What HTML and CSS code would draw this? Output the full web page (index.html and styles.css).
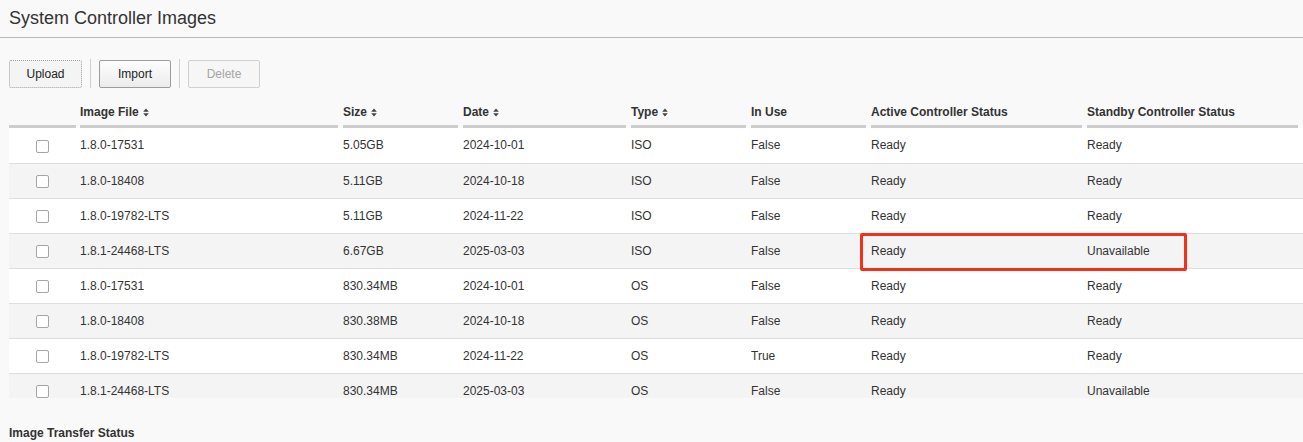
FILE: index.html
```html
<!DOCTYPE html>
<html lang="en">
<head>
<meta charset="utf-8">
<title>System Controller Images</title>
<link rel="stylesheet" href="styles.css">
</head>
<body>
<div class="page">
  <h1 class="title">System Controller Images</h1>
  <div class="toolbar">
    <button class="btn btn-focus">Upload</button>
    <span class="sep"></span>
    <button class="btn">Import</button>
    <span class="sep"></span>
    <button class="btn" disabled>Delete</button>
  </div>
  <div class="table-wrap">
    <table class="grid">
      <colgroup>
        <col class="c-check"><col class="c-file"><col class="c-size"><col class="c-date"><col class="c-type"><col class="c-use"><col class="c-active"><col class="c-standby">
      </colgroup>
      <thead>
        <tr>
          <th class="th-check"></th>
          <th>Image File <svg class="sort" width="6" height="9" viewBox="0 0 6 9"><path d="M3 0.5 L5.8 3.8 H0.2 Z M3 8.5 L5.8 5.2 H0.2 Z" fill="#444"/></svg></th>
          <th>Size <svg class="sort" width="6" height="9" viewBox="0 0 6 9"><path d="M3 0.5 L5.8 3.8 H0.2 Z M3 8.5 L5.8 5.2 H0.2 Z" fill="#444"/></svg></th>
          <th>Date <svg class="sort" width="6" height="9" viewBox="0 0 6 9"><path d="M3 0.5 L5.8 3.8 H0.2 Z M3 8.5 L5.8 5.2 H0.2 Z" fill="#444"/></svg></th>
          <th>Type <svg class="sort" width="6" height="9" viewBox="0 0 6 9"><path d="M3 0.5 L5.8 3.8 H0.2 Z M3 8.5 L5.8 5.2 H0.2 Z" fill="#444"/></svg></th>
          <th>In Use</th>
          <th>Active Controller Status</th>
          <th>Standby Controller Status</th>
        </tr>
      </thead>
      <tbody>
        <tr><td class="td-check"><input type="checkbox" class="cb"></td><td>1.8.0-17531</td><td>5.05GB</td><td>2024-10-01</td><td>ISO</td><td>False</td><td>Ready</td><td>Ready</td></tr>
        <tr><td class="td-check"><input type="checkbox" class="cb"></td><td>1.8.0-18408</td><td>5.11GB</td><td>2024-10-18</td><td>ISO</td><td>False</td><td>Ready</td><td>Ready</td></tr>
        <tr><td class="td-check"><input type="checkbox" class="cb"></td><td>1.8.0-19782-LTS</td><td>5.11GB</td><td>2024-11-22</td><td>ISO</td><td>False</td><td>Ready</td><td>Ready</td></tr>
        <tr><td class="td-check"><input type="checkbox" class="cb"></td><td>1.8.1-24468-LTS</td><td>6.67GB</td><td>2025-03-03</td><td>ISO</td><td>False</td><td>Ready</td><td>Unavailable</td></tr>
        <tr><td class="td-check"><input type="checkbox" class="cb"></td><td>1.8.0-17531</td><td>830.34MB</td><td>2024-10-01</td><td>OS</td><td>False</td><td>Ready</td><td>Ready</td></tr>
        <tr><td class="td-check"><input type="checkbox" class="cb"></td><td>1.8.0-18408</td><td>830.38MB</td><td>2024-10-18</td><td>OS</td><td>False</td><td>Ready</td><td>Ready</td></tr>
        <tr><td class="td-check"><input type="checkbox" class="cb"></td><td>1.8.0-19782-LTS</td><td>830.34MB</td><td>2024-11-22</td><td>OS</td><td>True</td><td>Ready</td><td>Ready</td></tr>
        <tr><td class="td-check"><input type="checkbox" class="cb"></td><td>1.8.1-24468-LTS</td><td>830.34MB</td><td>2025-03-03</td><td>OS</td><td>False</td><td>Ready</td><td>Unavailable</td></tr>
      </tbody>
    </table>
    <div class="highlight"></div>
  </div>
  <h2 class="section">Image Transfer Status</h2>
</div>
</body>
</html>
```

FILE: styles.css
```css
* { box-sizing: border-box; }
html, body { margin: 0; padding: 0; }
body {
  background: #f9f9f9;
  font-family: "Liberation Sans", Arial, sans-serif;
  color: #333;
  font-size: 12px;
}
.page { width: 1303px; overflow: hidden; }
.title {
  margin: 0;
  padding: 6px 0 0 9px;
  height: 38px;
  font-size: 18px;
  font-weight: normal;
  color: #333;
  border-bottom: 1px solid #b8b8b8;
  line-height: 24px;
}
.toolbar {
  display: flex;
  align-items: center;
  gap: 8px;
  padding: 21px 0 0 9px;
  height: 50px;
}
.btn {
  width: 72px;
  height: 28px;
  font-family: inherit;
  font-size: 12px;
  color: #222;
  background: linear-gradient(#fdfdfd, #ececec);
  border: 1px solid #9c9c9c;
  border-radius: 2px;
  padding: 0;
}
.btn-focus {
  width: 73px;
  border: 1px dotted #a0a0a0;
  background: #f4f4f4;
}
.btn:disabled {
  color: #a5a5a5;
  border-color: #d0d0d0;
  background: #f6f6f6;
}
.sep {
  width: 1px;
  height: 29px;
  background: #cfcfcf;
}
.table-wrap {
  position: relative;
  margin: 12px 0 0 9px;
  height: 298px;
  overflow: hidden;
}
.grid {
  border-collapse: collapse;
  table-layout: fixed;
  width: 1294px;
}
.c-check { width: 71px; }
.c-file { width: 263px; }
.c-size { width: 120px; }
.c-date { width: 168px; }
.c-type { width: 120px; }
.c-use { width: 120px; }
.c-active { width: 216px; }
.c-standby { width: 216px; }
.grid th {
  height: 28px;
  padding: 0 0 4px 0;
  text-align: left;
  font-weight: bold;
  font-size: 12px;
  color: #333;
  white-space: nowrap;
  background: linear-gradient(#cdcdcd, #cdcdcd) no-repeat left bottom / calc(100% - 4px) 3px;
}
.grid th:not(.th-check) {
  background-position: -1px bottom;
}
.sort { vertical-align: -1px; margin-left: 1px; }
.grid td {
  height: 35px;
  padding: 0;
  border-bottom: 1px solid #dedede;
  background: #fff;
  white-space: nowrap;
  color: #333;
}
.grid tbody tr:nth-child(even) td { background: #f4f4f4; }
.td-check { text-align: center; padding-right: 4px !important; }
.th-check { padding-right: 4px; }
.cb {
  appearance: none;
  -webkit-appearance: none;
  width: 13px;
  height: 13px;
  margin: 1px 0 0 0;
  border: 1px solid #a5a5a5;
  border-radius: 2px;
  background: #fff;
  vertical-align: middle;
}
.highlight {
  position: absolute;
  left: 851px;
  top: 133px;
  width: 327px;
  height: 38px;
  border: 3px solid #f4301a;
  border-radius: 2px;
  pointer-events: none;
}
.section {
  margin: 0;
  padding: 28px 0 0 9px;
  font-size: 12px;
  font-weight: bold;
  color: #333;
}
```
